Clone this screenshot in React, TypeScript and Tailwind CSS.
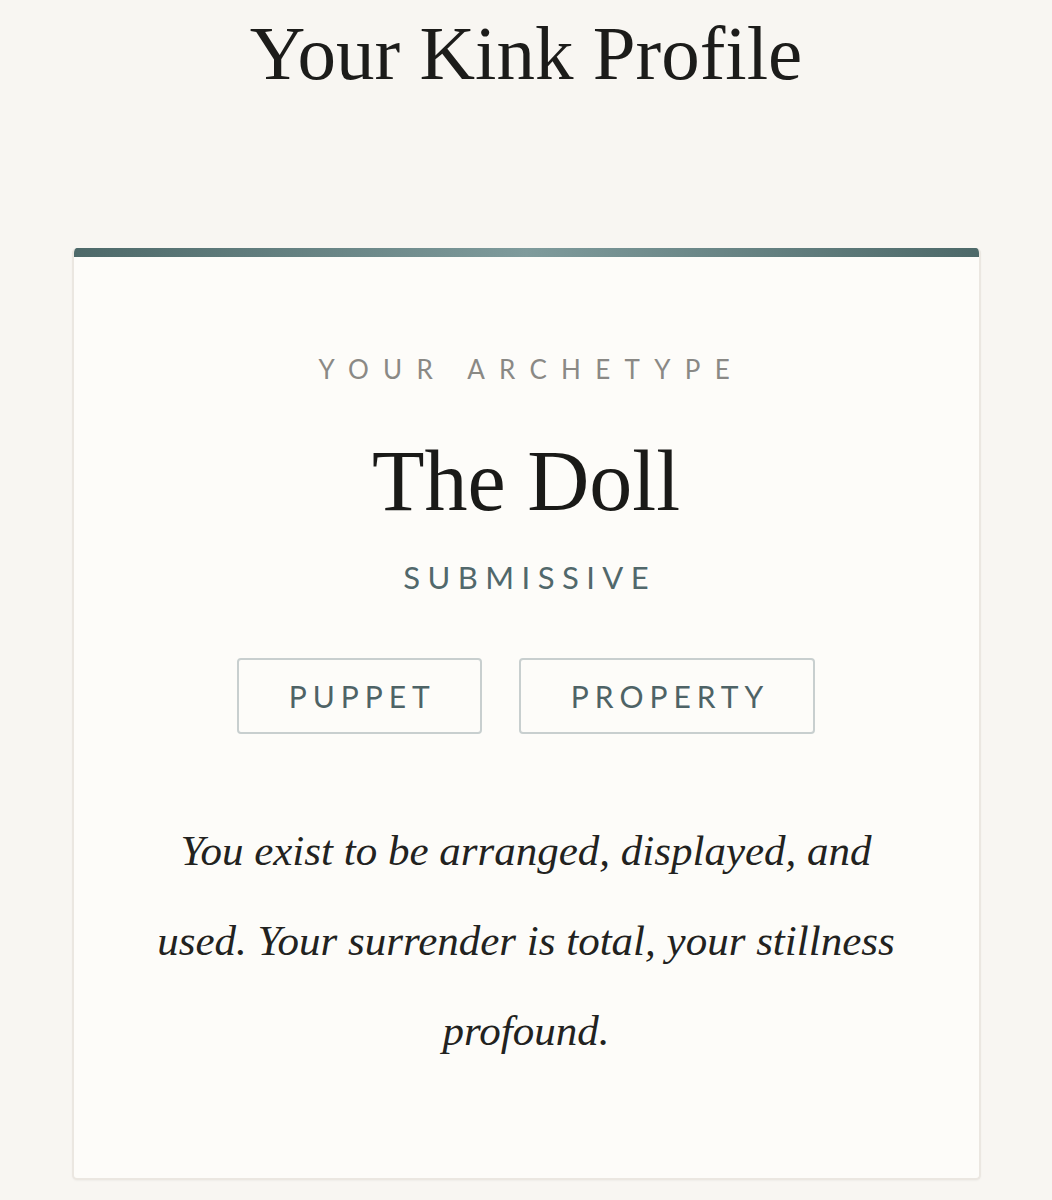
import React from 'react';

const serif = { fontFamily: '"Liberation Serif", "Times New Roman", serif' };
const sans = { fontFamily: 'Lato, "Open Sans", sans-serif' };

const traits = ['PUPPET', 'PROPERTY'];

export default function App() {
  return (
    <div className="min-h-screen w-full bg-[#f8f6f2] pt-[15px] pb-[20px]">
      {/* Page title */}
      <h1
        className="text-center text-[77px] leading-none text-[#1c1c1a] font-normal mb-[156px]"
        style={serif}
      >
        Your Kink Profile
      </h1>

      {/* Result card */}
      <div className="w-[909px] mx-auto bg-[#fdfcf9] border-2 border-t-0 border-[#ebe7e1] rounded-[5px] overflow-hidden shadow-[0_1px_2px_rgba(0,0,0,0.04)]">
        <div className="h-[9px] bg-gradient-to-r from-[#4d6969] via-[#7f9b9c] to-[#4d6969]" />

        <div className="flex flex-col items-center pt-[99px] pb-[102px]">
          <p
            className="text-[26px] leading-none tracking-[0.55em] pl-[0.4em] text-[#8a8985]"
            style={sans}
          >
            YOUR ARCHETYPE
          </p>

          <h2
            className="mt-[56px] text-[86px] leading-none text-[#1a1a18] font-normal"
            style={serif}
          >
            The Doll
          </h2>

          <p
            className="mt-[38px] text-[31px] leading-none tracking-[0.24em] pl-[0.24em] text-[#51686b]"
            style={sans}
          >
            SUBMISSIVE
          </p>

          <div className="mt-[65px] flex gap-[37px]">
            {traits.map((t) => (
              <span
                key={t}
                className="border-2 border-[#c8cfcf] rounded-[4px] px-[44px] py-[21px] text-[30px] leading-none tracking-[0.2em] text-[#4e6366]"
                style={sans}
              >
                <span className="pl-[0.2em]">{t}</span>
              </span>
            ))}
          </div>

          <p
            className="mt-[72px] w-[770px] text-center italic text-[43px] leading-[90px] text-[#222220]"
            style={serif}
          >
            You exist to be arranged, displayed, and used. Your surrender is total, your stillness profound.
          </p>
        </div>
      </div>
    </div>
  );
}
